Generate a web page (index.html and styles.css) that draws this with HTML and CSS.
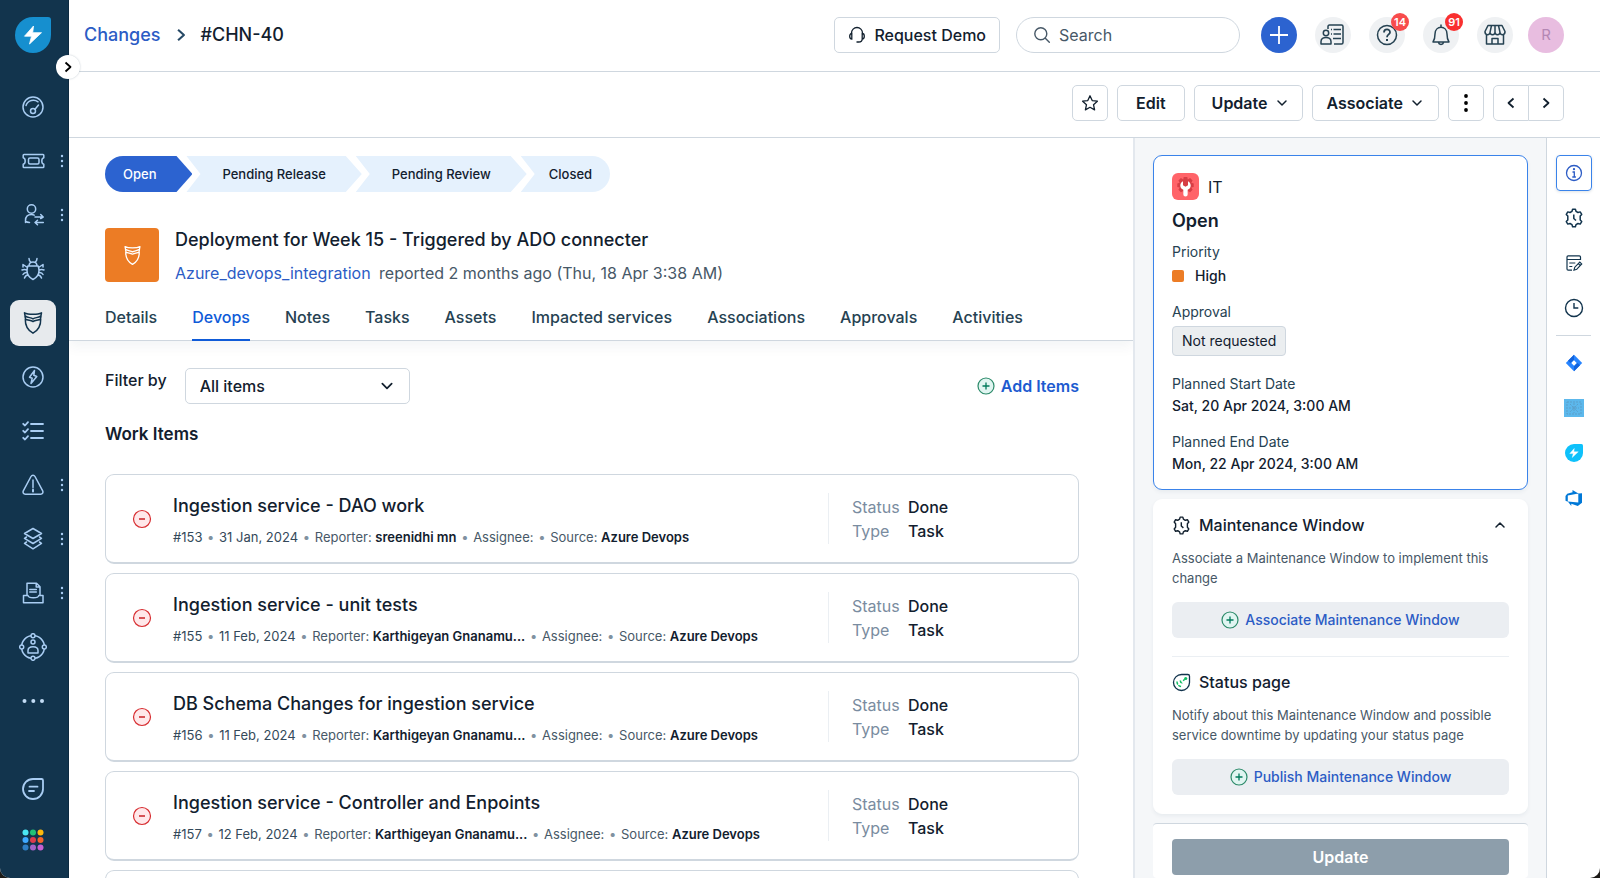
FILE: index.html
```html
<!DOCTYPE html>
<html lang="en">
<head>
<meta charset="utf-8">
<meta name="viewport" content="width=device-width, initial-scale=1">
<title>#CHN-40 - Changes</title>
<link rel="stylesheet" href="styles.css">
</head>
<body>
<svg class="sprite" aria-hidden="true">
  <symbol id="minus" viewBox="0 0 20 20"><circle cx="10" cy="10" r="8.5" fill="#ffe8ea" stroke="#d72d30" stroke-width="1.2"/><path d="M7 10h6" stroke="#c82124" stroke-width="1.5"/></symbol>
  <symbol id="plus" viewBox="0 0 18 18"><circle cx="9" cy="9" r="8" fill="#e0f5f1" stroke="#2b8a69" stroke-width="1.2"/><path d="M9 5.5v7M5.500 9h7" stroke="#00795b" stroke-width="1.3"/></symbol>
  <symbol id="down" viewBox="0 0 12 12"><path d="M2 4l4 4 4-4" fill="none" stroke="currentColor" stroke-width="1.5" stroke-linecap="round" stroke-linejoin="round"/></symbol>
  <symbol id="right" viewBox="0 0 12 12"><path d="M3.500 1.500L8.500 6l-5 4.500" fill="none" stroke="currentColor" stroke-width="1.800" stroke-linejoin="round"/></symbol>
  <symbol id="dots" viewBox="0 0 4 14"><circle cx="2" cy="2" r="1.200"/><circle cx="2" cy="7" r="1.200"/><circle cx="2" cy="12" r="1.200"/></symbol>
  <symbol id="mask" viewBox="0 0 24 24"><path d="M3.500 1.800c3.500 1.900 13.500 1.900 17 0l-.6 3.200c-3.400 2-5.400 1.300-7.900 2.900-2.500-1.600-4.500-.9-7.900-2.900zM4 5c.4 2.200.4 2.600.6 3.200M20 5c-.4 2.200-.4 2.600-.6 3.200M4.300 8.200c3 1.500 5.200.7 7.700 2.300 2.500-1.600 4.700-.8 7.700-2.300.2 6.600-2.400 11-7.700 14-5.300-3-7.900-7.400-7.700-14z"/></symbol>
  <symbol id="gear-clock" viewBox="0 0 20 20"><path d="M8 3.300L8.600 1.200h2.800L12 3.300l2 1.200 2.200-.6 1.500 2.500-1.500 1.700v3.800l1.500 1.700-1.500 2.500-2.200-.6-2 1.200-.6 2.100H8.600L8 16.700l-2-1.200-2.200.6-1.500-2.500 1.500-1.700V8.100L2.300 6.400l1.500-2.500 2.200.6zM9.800 6.500v4l2.200 2" fill="none" stroke="currentColor" stroke-width="1.500" stroke-linejoin="round"/></symbol>
  <symbol id="bolt-drop" viewBox="0 0 36 36"><path d="M18 0h15a3 3 0 0 1 3 3v15a18 18 0 1 1-18-18z" fill="currentColor"/><path d="M18.500 9L9.500 19.200h7l-2 7.800 12-11.300H17.700z" fill="#fff" stroke="#fff" stroke-width=".8" stroke-linejoin="round"/></symbol>
</svg>
<div class="app">
  <aside class="sidebar">
    <a class="logo" href="#" aria-label="Home"><svg width="36" height="36"><use href="#bolt-drop"/></svg></a>
    <button class="expand" aria-label="Expand menu"><svg width="12" height="12"><use href="#right"/></svg></button>
    <nav class="nav" aria-label="Main">
      <a href="#" aria-label="Dashboard"><svg class="icon" viewBox="0 0 24 24"><circle cx="12" cy="12" r="10"/><path d="M5 10.500C7 4.600 13.500 4.200 17 6.800M14 14.300l3.500-4.300"/><circle cx="12" cy="16" r="2.500"/></svg></a>
      <a href="#" aria-label="Tickets"><svg class="icon" viewBox="0 0 24 24"><path d="M3 5.500h19c.5 0 .8.300.8.800v2.400c-1.800.4-2 1.300-2 3.300s.2 2.900 2 3.300v2.400c0 .5-.3.800-.8.800H3c-.5 0-.8-.3-.8-.8v-2.400c1.800-.4 2-1.300 2-3.300s-.2-2.900-2-3.300V6.300c0-.5.300-.8.800-.8z"/><rect x="7.500" y="9" width="10.500" height="6" rx="1.500"/></svg><svg class="more" viewBox="0 0 4 14"><use href="#dots"/></svg></a>
      <a href="#" aria-label="Service requests"><svg class="icon" viewBox="0 0 24 24"><circle cx="10.500" cy="6" r="4.200"/><path d="M4.500 19.500v-2c0-4 2.500-6 6-6 1.200 0 2 .2 2.700.6M4.500 18.500c1.200.7 2.600.9 4 .9M14 14h8m-2.300-2.500L22.200 14l-2.500 1.500M22.300 19.500H14m2.500-2.300L14 19.500l2.500 2.300"/></svg><svg class="more" viewBox="0 0 4 14"><use href="#dots"/></svg></a>
      <a href="#" aria-label="Problems"><svg class="icon" viewBox="0 0 24 24"><path d="M12 22.500c-4-2-6-5.500-6-9 0-1.500.3-3 .8-4.500h10.400c.5 1.500.8 3 .8 4.500 0 3.500-2 7-6 9zM8 9c0-5.500 8-5.500 8 0M8 1.500c0 1.800.5 2.800 1.800 3.600M16 1.500c0 1.800-.5 2.800-1.800 3.600M6.500 10.500L2 7.500v2.500M6 13c-2-.8-3.500-.8-5 0M6.200 15.500c-2-.3-3.500.5-4.200 2M7.300 18c-2 .2-3.300 1.200-3.800 3M17.500 10.500L22 7.500v2.500M18 13c2-.8 3.500-.8 5 0M17.800 15.500c2-.3 3.500.5 4.200 2M16.700 18c2 .2 3.300 1.200 3.800 3"/></svg></a>
      <a href="#" class="active" aria-label="Changes" aria-current="page"><svg class="icon"><use href="#mask"/></svg></a>
      <a href="#" aria-label="Releases"><svg class="icon" viewBox="0 0 24 24"><circle cx="12" cy="12" r="10"/><path d="M13.500 5.500l-5 6.700 2.700 1L10 18.500l5.800-7-3-1.200z"/></svg></a>
      <a href="#" aria-label="Tasks"><svg class="icon" viewBox="0 0 24 24"><path d="M10 5h12M10 12h12M10 19h12M2.200 4.800L4 6.500 7 3.200M2.200 11.800L4 13.500l3-3.300M2.200 18.800L4 20.500l3-3.300" stroke-width="1.800"/></svg></a>
      <a href="#" aria-label="Alerts"><svg class="icon" viewBox="0 0 24 24"><path d="M10 3.500L2.300 17.800c-.8 1.600.2 3.400 2 3.400h15.400c1.800 0 2.800-1.800 2-3.400L14 3.500c-.9-1.600-3.100-1.600-4 0zM12 7v7.500"/><path d="M12 16.600v2" stroke-width="2"/></svg><svg class="more" viewBox="0 0 4 14"><use href="#dots"/></svg></a>
      <a href="#" aria-label="Assets"><svg class="icon" viewBox="0 0 24 24"><path d="M12 1.500l8.500 5-8.500 5-8.500-5zM5.500 10l-2 1.300 8.500 5.200 8.500-5.200-2-1.300M5.500 15l-2 1.300 8.500 5.500 8.500-5.500-2-1.300"/></svg><svg class="more" viewBox="0 0 4 14"><use href="#dots"/></svg></a>
      <a href="#" aria-label="Projects"><svg class="icon" viewBox="0 0 24 24"><path d="M6 14.500V2.200h9.500L19 5.800v8.700M15.200 2.500V6H19M8.800 8.500h6.500M8.800 11h6.500M6 14.500H2.500v7.300h19.500v-7.300h-4.200c-.5 3-10.300 3-10.800 0z"/></svg><svg class="more" viewBox="0 0 4 14"><use href="#dots"/></svg></a>
      <a href="#" aria-label="People"><svg class="icon icon-wide" viewBox="0 0 28 28"><circle cx="14" cy="14" r="11.500"/><g class="node"><circle cx="14" cy="2.700" r="2"/><circle cx="14" cy="25.300" r="2"/><circle cx="2.700" cy="14" r="2"/><circle cx="25.300" cy="14" r="2"/></g><circle cx="14" cy="9" r="2"/><path d="M9 20v-2.500c0-5 10-5 10 0V20z"/></svg></a>
      <a href="#" aria-label="More"><svg class="icon" viewBox="0 0 24 24"><g class="solid"><circle cx="3.500" cy="12" r="2"/><circle cx="12.300" cy="12" r="2"/><circle cx="21" cy="12" r="2"/></g></svg></a>
    </nav>
    <nav class="nav nav-end" aria-label="Apps">
      <a href="#" aria-label="Chat"><svg class="icon" viewBox="0 0 24 24"><path d="M12 2h8.500c1 0 1.500.6 1.500 1.500V12A10 10 0 1 1 12 2zM8.500 9.700h8M8 14h5" stroke-width="1.800"/></svg></a>
      <a href="#" aria-label="Switcher"><svg class="apps" viewBox="0 0 24 24"><circle cx="4.500" cy="4.500" r="3" fill="#4be6f2"/><circle cx="12" cy="4.500" r="3" fill="#21c176"/><circle cx="19.500" cy="4.500" r="3" fill="#fcb80c"/><circle cx="4.500" cy="12" r="3" fill="#3fa9ff"/><circle cx="12" cy="12" r="3" fill="#dc3b4e"/><circle cx="19.500" cy="12" r="3" fill="#f4632a"/><circle cx="4.500" cy="19.500" r="3" fill="#2f7fc4"/><circle cx="12" cy="19.500" r="3" fill="#a163c8"/><circle cx="19.500" cy="19.500" r="3" fill="#c65fd0"/></svg></a>
    </nav>
  </aside>

  <div class="page">
    <header class="topbar">
      <nav class="crumbs" aria-label="Breadcrumb"><a href="#">Changes</a><svg width="14" height="14"><use href="#right"/></svg><span>#CHN-40</span></nav>
      <div class="tools">
        <button class="btn demo"><svg width="18" height="18" viewBox="0 0 18 18" fill="none" stroke="currentColor" stroke-width="1.300"><path d="M3.500 8V7a5.500 5.500 0 0 1 11 0v1M3.800 7.500C1 7.500 1 13 3.800 13zM14.200 7.500C17 7.500 17 13 14.200 13zM14.200 13c0 2-1 3-3.500 3H8.500"/></svg>Request Demo</button>
        <label class="search"><svg width="18" height="18" viewBox="0 0 18 18" fill="none" stroke="currentColor" stroke-width="1.400" stroke-linecap="round"><circle cx="7.800" cy="7.800" r="6"/><path d="M12.300 12.300l4 4"/></svg><input type="text" placeholder="Search" aria-label="Search"></label>
        <div class="rounds">
          <button class="round add" aria-label="Create"><svg width="20" height="20" viewBox="0 0 20 20"><path d="M10 1v18M1 10h18" stroke="#fff" stroke-width="1.800"/></svg></button>
          <button class="round" aria-label="Directory"><svg width="26" height="24" viewBox="0 0 26 24"><path d="M8 6V3.500C8 2.700 8.500 2 9.500 2h12c1 0 1.500.7 1.500 1.500v16c0 1-.5 1.500-1.500 1.500H14M11 6.500h1M13.500 6.500H21M11 11h1M13.500 11H21M13 15.500h8"/><circle cx="6" cy="10" r="2.700"/><path d="M1 21v-2.500c0-5.500 10-5.500 10 0V21z"/></svg></button>
          <button class="round" aria-label="Help"><svg width="24" height="24" viewBox="0 0 24 24"><circle cx="12" cy="12" r="9.500"/><path d="M9 9.500c0-4 6-4 6-.3 0 2.200-3 2.300-3 5" stroke-width="1.800"/><path d="M12 16v2" stroke-width="2"/></svg><span class="badge badge-help">14</span></button>
          <button class="round" aria-label="Notifications"><svg width="24" height="24" viewBox="0 0 24 24"><path d="M12 1.500V4M4 19c1.800-2.500 2-4 2-8 0-9 12-9 12 0 0 4 .2 5.500 2 8zM9.500 19.500c.5 2.500 4.500 2.500 5 0"/></svg><span class="badge">91</span></button>
          <button class="round" aria-label="Marketplace"><svg width="24" height="24" viewBox="0 0 24 24"><path d="M5 2.500h14l3 6c.3 4-5 4.200-5 .8 0 3.200-5 3.200-5 0 0 3.200-5 3.200-5 0 0 3.400-5.300 3.200-5-.8zM7 9.300L8.500 2.500M12 9.300V2.500M17 9.300L15.500 2.500M3.500 11.500V21h17v-9.500M9 21v-5.500h6V21"/></svg></button>
          <button class="round avatar" aria-label="Profile">R</button>
        </div>
      </div>
    </header>

    <div class="actions">
      <button class="btn square" aria-label="Favourite"><svg width="18" height="18" viewBox="0 0 18 18"><path d="M9 1.800l2.200 4.800 5.200.6-3.900 3.500 1.100 5.200L9 13.300l-4.600 2.600 1.100-5.200L1.600 7.200l5.200-.6z" fill="none" stroke="currentColor" stroke-width="1.300" stroke-linejoin="round"/></svg></button>
      <button class="btn edit">Edit</button>
      <button class="btn">Update<svg width="12" height="12"><use href="#down"/></svg></button>
      <button class="btn associate">Associate<svg width="12" height="12"><use href="#down"/></svg></button>
      <button class="btn square" aria-label="More actions"><svg width="6" height="20" viewBox="0 0 6 20"><circle cx="3" cy="3" r="1.900"/><circle cx="3" cy="10" r="1.900"/><circle cx="3" cy="17" r="1.900"/></svg></button>
      <div class="pager"><button class="btn square" aria-label="Previous"><svg class="flip" width="12" height="12"><use href="#right"/></svg></button><button class="btn square" aria-label="Next"><svg width="12" height="12"><use href="#right"/></svg></button></div>
    </div>

    <div class="body">
      <main class="main">
        <div class="head">
          <ol class="stages"><li class="current">Open</li><li>Pending Release</li><li>Pending Review</li><li class="last">Closed</li></ol>
          <div class="title">
            <span class="type"><svg width="21" height="21"><use href="#mask"/></svg></span>
            <div><h1>Deployment for Week 15 - Triggered by ADO connecter</h1><p><a href="#">Azure_devops_integration</a> reported 2 months ago (Thu, 18 Apr 3:38 AM)</p></div>
          </div>
          <nav class="tabs" aria-label="Change sections"><a href="#">Details</a><a href="#" class="on" aria-current="page">Devops</a><a href="#">Notes</a><a href="#">Tasks</a><a href="#">Assets</a><a href="#">Impacted services</a><a href="#">Associations</a><a href="#">Approvals</a><a href="#">Activities</a></nav>
        </div>
        <div class="content">
          <div class="filter">
            <label for="filter">Filter by</label>
            <div class="select"><select id="filter"><option>All items</option></select><svg width="14" height="14"><use href="#down"/></svg></div>
            <button class="add-items"><svg width="18" height="18"><use href="#plus"/></svg>Add Items</button>
          </div>
          <h2>Work Items</h2>
          <div class="cards">
            <article class="card"><button class="remove" aria-label="Remove"><svg width="20" height="20"><use href="#minus"/></svg></button><div class="info"><h3>Ingestion service - DAO work</h3><p><span>#153</span> <i>•</i> <span>31 Jan, 2024</span> <i>•</i> Reporter: <b>sreenidhi mn</b> <i>•</i> Assignee: <i>•</i> Source: <b>Azure Devops</b></p></div><dl><dt>Status</dt><dd>Done</dd><dt>Type</dt><dd>Task</dd></dl></article>
            <article class="card"><button class="remove" aria-label="Remove"><svg width="20" height="20"><use href="#minus"/></svg></button><div class="info"><h3>Ingestion service - unit tests</h3><p><span>#155</span> <i>•</i> <span>11 Feb, 2024</span> <i>•</i> Reporter: <b>Karthigeyan Gnanamu...</b> <i>•</i> Assignee: <i>•</i> Source: <b>Azure Devops</b></p></div><dl><dt>Status</dt><dd>Done</dd><dt>Type</dt><dd>Task</dd></dl></article>
            <article class="card"><button class="remove" aria-label="Remove"><svg width="20" height="20"><use href="#minus"/></svg></button><div class="info"><h3>DB Schema Changes for ingestion service</h3><p><span>#156</span> <i>•</i> <span>11 Feb, 2024</span> <i>•</i> Reporter: <b>Karthigeyan Gnanamu...</b> <i>•</i> Assignee: <i>•</i> Source: <b>Azure Devops</b></p></div><dl><dt>Status</dt><dd>Done</dd><dt>Type</dt><dd>Task</dd></dl></article>
            <article class="card"><button class="remove" aria-label="Remove"><svg width="20" height="20"><use href="#minus"/></svg></button><div class="info"><h3>Ingestion service - Controller and Enpoints</h3><p><span>#157</span> <i>•</i> <span>12 Feb, 2024</span> <i>•</i> Reporter: <b>Karthigeyan Gnanamu...</b> <i>•</i> Assignee: <i>•</i> Source: <b>Azure Devops</b></p></div><dl><dt>Status</dt><dd>Done</dd><dt>Type</dt><dd>Task</dd></dl></article>
            <article class="card"></article>
          </div>
        </div>
      </main>

      <aside class="panel">
        <section class="box summary">
          <div class="workspace"><svg width="27" height="27" viewBox="0 0 27 27"><rect width="27" height="27" rx="6" fill="#ff6469"/><path d="M11.700 4h3.600l.5 2.400 2.300-1.300 2.500 2.500-1.300 2.200 2.400.6v3.600l-2.400.6 1.300 2.200-2.500 2.500-2.300-1.300-.5 2.400h-3.600l-.5-2.400-2.300 1.300-2.500-2.500 1.300-2.200-2.400-.6v-3.600l2.400-.6-1.300-2.200 2.500-2.500 2.300 1.300z" fill="#d73e45"/><path d="M11 8.200c-1.700.9-2.700 2.500-2.700 4.300 0 2 1.200 3.600 3 4.300v4.400a2.200 2.200 0 0 0 4.400 0v-4.400c1.800-.7 3-2.300 3-4.300 0-1.800-1-3.400-2.700-4.300v4l-2.500 1.600-2.500-1.600z" fill="#fff"/></svg>IT</div>
          <h2>Open</h2>
          <dl>
            <dt>Priority</dt><dd class="priority">High</dd>
            <dt>Approval</dt><dd class="approval"><span>Not requested</span></dd>
            <dt>Planned Start Date</dt><dd>Sat, 20 Apr 2024, 3:00 AM</dd>
            <dt>Planned End Date</dt><dd>Mon, 22 Apr 2024, 3:00 AM</dd>
          </dl>
        </section>
        <section class="box window">
          <h3><svg width="19" height="19"><use href="#gear-clock"/></svg>Maintenance Window<button aria-label="Collapse"><svg class="up" width="12" height="12"><use href="#down"/></svg></button></h3>
          <p>Associate a Maintenance Window to implement this change</p>
          <button class="soft"><svg width="18" height="18"><use href="#plus"/></svg>Associate Maintenance Window</button>
          <hr>
          <h3><svg width="19" height="19" viewBox="0 0 19 19" fill="none"><path d="M9.500 1.500h6.300c1 0 1.700.7 1.700 1.700v6.300a8 8 0 1 1-8-8z" stroke="#12344d" stroke-width="1.300"/><path d="M5 8.500c0 3 1.800 5 5 5M8.300 7.500c0 1.700 1 2.700 2.700 2.700M11.200 7.700l1.500-1.500" stroke="#0dbd61" stroke-width="1.500" stroke-dasharray="3 1"/><circle cx="13.700" cy="5.500" r="1.600" fill="#0dbd61"/></svg>Status page</h3>
          <p>Notify about this Maintenance Window and possible service downtime by updating your status page</p>
          <button class="soft"><svg width="18" height="18"><use href="#plus"/></svg>Publish Maintenance Window</button>
        </section>
        <div class="save"><button disabled>Update</button></div>
      </aside>

      <nav class="rail" aria-label="Widgets">
        <button class="selected" aria-label="Info"><svg width="18" height="18" viewBox="0 0 18 18" fill="none" stroke="currentColor" stroke-width="1.300"><circle cx="9" cy="9" r="7.500"/><path d="M7.500 8h1.800v5M7.300 13h3.600"/><circle cx="9" cy="5.200" r=".5"/></svg></button>
        <button aria-label="Maintenance"><svg width="20" height="20"><use href="#gear-clock"/></svg></button>
        <button aria-label="Notes"><svg width="18" height="18" viewBox="0 0 18 18" fill="none" stroke="currentColor" stroke-width="1.200"><path d="M15.500 6V3c0-.8-.4-1.200-1.200-1.200H3.200C2.400 1.800 2 2.200 2 3v12c0 .8.400 1.200 1.200 1.200H7M2 5.500h13.500M4.300 9h6M4.300 12.500h3M9 16.200l.8-3 5-5.200 1.900 1.900-5 5.400zM13.300 9.600l1.800 1.800"/></svg></button>
        <button aria-label="History"><svg width="20" height="20" viewBox="0 0 20 20" fill="none" stroke="currentColor" stroke-width="1.400"><circle cx="10" cy="10" r="8.500"/><path d="M10 5v5h4.300"/></svg></button>
        <hr>
        <button aria-label="Jira"><svg width="18" height="18" viewBox="0 0 18 18"><path d="M9 .8L17.200 9 9 17.200.8 9z" fill="#2684ff"/><path d="M9 .8v5L5.500 9 3 6.800zM9 17.200v-5L12.500 9l2.500 2.200z" fill="#1263dc"/><path d="M9 6.300L11.700 9 9 11.700 6.300 9z" fill="#fff"/></svg></button>
        <button aria-label="Widget"><svg width="20" height="18" viewBox="0 0 20 18"><path d="M0 0h20v18H0z" fill="#5cb8ec"/><path d="M3 3h14v12H3z" fill="none" stroke="#5a9fca" stroke-dasharray="2 1"/><path d="M6 5l8 8M14 5l-8 8M10 4v10M5 9h10" stroke="#5a9fca" stroke-dasharray="2 1"/></svg></button>
        <button class="fresh" aria-label="Freshservice"><svg width="18" height="18"><use href="#bolt-drop"/></svg></button>
        <button aria-label="Azure DevOps"><svg width="18" height="18" viewBox="0 0 18 18"><path d="M17 4.200v9.500L12.800 17l-6.500-2.300V17L2.800 12.600l10.500.9V4.400zM13.400 4.500L7.500 1v2.300L2.200 4.800.5 6.900v4.900l2.300 1V6.500z" fill="#0078d7"/></svg></button>
      </nav>
    </div>
  </div>
</div>
</body>
</html>
```
FILE: styles.css
```css
*, *::before, *::after { box-sizing: border-box; }
html, body { height: 100%; margin: 0; }
body { background: #1c1a17; color: #12202e; font: 14px/20px Inter, "Noto Sans", sans-serif; }
h1, h2, h3, p, dl, dd, ol { margin: 0; padding: 0; }
button, input, select { font: inherit; color: inherit; margin: 0; }
button { padding: 0; border: 0; background: none; display: flex; align-items: center; justify-content: center; cursor: pointer; }
a { color: #2c5cc5; text-decoration: none; }
svg { display: block; flex: none; }
hr { border: 0; margin: 0; }
.sprite { position: absolute; width: 0; height: 0; }

.app { display: flex; height: 100vh; overflow: hidden; border-radius: 0 0 10px 10px; background: #fff; }

/* Sidebar */
.sidebar { position: relative; flex: none; width: 69px; display: flex; flex-direction: column; background: #12344d; border-right: 1px solid #0d2a40; padding-bottom: 13px; }
.logo { color: #168fcf; padding: 17px 0 27px 15px; }
.expand { position: absolute; left: 56px; top: 55px; z-index: 2; width: 24px; height: 24px; border-radius: 50%; background: #fff; color: #000; box-shadow: 0 0 2px #12344d44; }
.nav a { display: grid; grid-template-columns: 46px 11px; padding-left: 10px; align-items: center; justify-items: center; height: 54px; }
.nav-end { margin-top: auto; }
.nav-end a { height: 51px; }
.icon { width: 24px; height: 24px; fill: none; stroke: #a9cdf3; stroke-width: 1.5; stroke-linecap: round; stroke-linejoin: round; }
.icon-wide { width: 28px; height: 28px; }
.node { fill: #12344d; }
.solid { fill: #c3dcf5; stroke: none; }
.more { width: 4px; height: 14px; fill: #a9cdf3; }
.apps { width: 24px; height: 24px; }
.nav .active::before { content: ""; grid-area: 1 / 1; width: 46px; height: 46px; border-radius: 9px; background: #e7eaed; }
.nav .active .icon { grid-area: 1 / 1; z-index: 1; stroke: #12344d; }

/* Top bar */
.page { flex: 1; min-width: 0; display: flex; flex-direction: column; }
.topbar { flex: none; display: flex; justify-content: space-between; height: 72px; padding: 17px 36px 0 15px; border-bottom: 1px solid #cfd7df; }
.crumbs { display: flex; align-items: center; gap: 13px; height: 36px; font-size: 18px; font-weight: 500; }
.crumbs svg { color: #264966; }
.tools, .rounds { display: flex; }
.tools { gap: 16px; }
.rounds { gap: 18px; padding-left: 5px; }
.btn { height: 36px; gap: 8px; border: 1px solid #cfd7df; border-radius: 5px; background: #fff; font-size: 16px; font-weight: 600; white-space: nowrap; }
.demo { padding: 0 13px; font-weight: 500; }
.search { display: flex; align-items: center; gap: 8px; width: 224px; height: 36px; padding: 0 16px; border: 1px solid #cfd7df; border-radius: 18px; color: #475867; font-size: 16px; }
.search input { width: 100%; min-width: 0; padding: 0; border: 0; outline: 0; background: none; }
.search input::placeholder { color: #475867; opacity: 1; }
.round { position: relative; width: 36px; height: 36px; border-radius: 50%; background: #eff1f3; }
.round svg { fill: none; stroke: #264252; stroke-width: 1.5; stroke-linejoin: round; }
.add { background: #2c63d0; }
.avatar { background: #e8bde0; color: #b487b4; font-size: 15px; }
.rounds .avatar { margin-left: -3px; }
.badge { position: absolute; right: -4px; top: -4px; width: 18px; height: 18px; border-radius: 50%; background: #f9302f; color: #fff; font-size: 11px; line-height: 18px; font-weight: 600; text-align: center; }
.badge-help { background: #f84c4c; }

.actions { flex: none; display: flex; justify-content: flex-end; gap: 9px; height: 66px; padding: 13px 36px 0; border-bottom: 1px solid #cfd7df; }
.actions .btn { padding: 0 14px 0 17px; }
.actions .associate { padding: 0 15px 0 14px; }
.actions .edit { padding: 0 18px; }
.actions .square { width: 36px; padding: 0; }
.pager { display: flex; }
.pager .square:first-child { border-radius: 5px 0 0 5px; }
.actions .pager .square:last-child { width: 35px; border-radius: 0 5px 5px 0; border-left: 0; }
.flip { transform: scaleX(-1); }

/* Change */
.body { flex: 1; min-height: 0; display: flex; }
.main { flex: 1; min-width: 0; overflow: hidden; }
.head { padding: 18px 36px 0; border-bottom: 1px solid #cfd7df; box-shadow: 0 6px 12px #12344d0d; }
.stages { display: flex; list-style: none; font-size: 13px; font-weight: 500; line-height: 36px; }
.stages li { height: 36px; padding: 0 36px; margin-right: -6px; background: #e5f1fd; clip-path: polygon(0 0, calc(100% - 16px) 0, 100% 50%, calc(100% - 16px) 100%, 0 100%, 14px 50%); }
.stages .current { padding: 0 36px 0 18px; background: #2c63d0; color: #fff; border-radius: 18px 0 0 18px; clip-path: polygon(0 0, calc(100% - 16px) 0, 100% 50%, calc(100% - 16px) 100%, 0 100%); }
.stages .last { padding: 0 18px 0 28px; margin: 0; border-radius: 0 18px 18px 0; clip-path: polygon(0 0, 100% 0, 100% 100%, 0 100%, 14px 50%); }
.title { display: flex; gap: 16px; margin-top: 36px; }
.type { display: flex; align-items: center; justify-content: center; width: 54px; height: 54px; border-radius: 4px; background: #ec7c25; fill: none; stroke: #fff; stroke-width: 1.5; stroke-linejoin: round; }
.title h1 { font-size: 18px; line-height: 24px; font-weight: 500; }
.title p { margin-top: 9px; font-size: 16px; line-height: 24px; color: #475867; }
.title a { margin-right: 4px; }
.tabs { display: flex; gap: 35px; margin-top: 9px; font-size: 16px; font-weight: 500; }
.tabs a { height: 46px; line-height: 46px; color: #264252; white-space: nowrap; }
.tabs .on { color: #0f5bd8; box-shadow: 0 1px #0f5bd8, inset 0 -1px #0f5bd8; }
.content { padding: 27px 54px 0 36px; }
.filter { display: flex; font-size: 16px; font-weight: 500; }
.filter label { line-height: 24px; margin-right: 18px; }
.select { display: grid; width: 225px; align-items: center; }
.select select { grid-area: 1 / 1; height: 36px; padding: 0 14px; border: 1px solid #cfd7df; border-radius: 5px; background: #fff; appearance: none; }
.select svg { grid-area: 1 / 1; justify-self: end; margin-right: 16px; pointer-events: none; }
.add-items { margin-left: auto; gap: 6px; color: #1d5bd0; font-weight: 600; }
.content h2 { margin-top: 18px; font-size: 17px; line-height: 24px; font-weight: 600; }
.cards { display: grid; gap: 9px; margin-top: 28px; }
.card { display: grid; grid-template-columns: 67px 1fr 250px; min-height: 90px; border: 1px solid #cfd7df; border-bottom-width: 2px; border-radius: 9px; background: #fff; }
.remove { padding-left: 5px; }
.info { padding-top: 19px; min-width: 0; white-space: nowrap; }
.info h3 { font-size: 18px; line-height: 24px; font-weight: 500; }
.info p { margin-top: 9px; font-size: 13px; color: #475867; }
.info span { color: #34495a; }
.info i { margin: 0 1px; font-style: normal; color: #8091a0; }
.info b { font-weight: 600; color: #12202e; }
.card dl { display: grid; grid-template-columns: 56px 1fr; align-content: center; margin: 18px 0; padding-left: 23px; border-left: 1px solid #ebeff3; font-size: 16px; line-height: 24px; }
.card dt { color: #7a8ca0; }
.card dd { font-weight: 500; }

/* Summary panel */
.panel { flex: none; width: 413px; display: flex; flex-direction: column; padding: 17px 18px 0; border-left: 2px solid #e3e8ee; background: #f5f7f9; }
.box { flex: none; padding: 0 18px; border: 1px solid #fff; border-radius: 9px; background: #fff; box-shadow: 0 2px 4px #12344d0f; }
.summary { padding-bottom: 15px; border-color: #3a83ea; }
.workspace { display: flex; align-items: center; gap: 9px; margin-top: 17px; font-size: 16px; }
.summary h2 { margin-top: 9px; font-size: 18px; line-height: 24px; font-weight: 600; }
.summary dt { margin-top: 16px; color: #264252; }
.summary h2 + dl dt:first-child { margin-top: 9px; }
.summary dd { margin-top: 2px; font-weight: 500; }
.summary .priority { display: flex; align-items: center; gap: 11px; margin-top: 4px; }
.priority::before { content: ""; width: 12px; height: 12px; border-radius: 2px; background: #ec7c25; }
.summary .approval { margin-top: 4px; }
.approval span { display: inline-block; padding: 4px 9px; border: 1px solid #cfd7df; border-radius: 4px; background: #ebeef0; font-weight: 400; }
.approval + dt { margin-top: 18px; }
.window { margin-top: 9px; padding-bottom: 18px; }
.window h3 { display: flex; align-items: center; gap: 8px; margin-top: 13px; font-size: 16px; line-height: 24px; font-weight: 500; }
.window h3 button { margin-left: auto; width: 18px; height: 24px; }
.up { transform: scaleY(-1); }
.window p { margin-top: 11px; font-size: 13px; color: #475867; }
.soft { width: 100%; height: 36px; margin-top: 14px; gap: 6px; border-radius: 6px; background: #ebeef2; color: #2c5cc5; font-weight: 500; }
.window hr { height: 1px; margin-top: 18px; background: #ebeff3; }
.save { flex: 1; margin-top: 9px; padding: 15px 19px 0; border-top: 1px solid #cfd7df; border-radius: 4px; background: #fff; }
.save button { width: 100%; height: 36px; border-radius: 4px; background: #8d9eab; color: #fff; font-size: 16px; font-weight: 600; }

.rail { flex: none; width: 54px; display: flex; flex-direction: column; align-items: center; gap: 9px; padding-top: 17px; border-left: 1px solid #cfd7df; color: #12344d; }
.rail button { width: 36px; height: 36px; }
.rail .selected { border: 1px solid #3a83ea; border-radius: 4px; color: #2c5cc5; box-shadow: 0 1px 3px #12344d22; }
.rail hr { width: 35px; height: 1px; background: #cfd7df; }
.rail .fresh { color: #0ec1fb; }
```
